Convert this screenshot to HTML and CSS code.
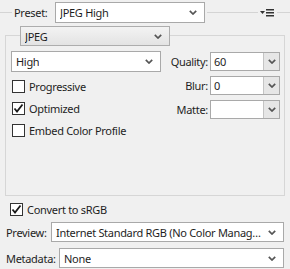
FILE: index.html
```html
<!DOCTYPE html>
<html lang="en">
<head>
  <meta charset="UTF-8" />
  <title>Save for Web - Optimize</title>
  <link rel="stylesheet" href="styles.css">
</head>
<body>
  <div class="panel">
    <!-- Preset row -->
    <div class="preset-row">
      <span class="rule rule-lead"></span>
      <span class="lbl preset-lbl">Preset:</span>
      <div class="select preset-select">
        <span class="value">JPEG High</span>
        <svg class="chev" width="8" height="5" viewBox="0 0 8 5"><polyline points="0.8,0.8 4,4 7.2,0.8" /></svg>
      </div>
      <span class="rule"></span>
      <svg class="menu-icon" width="15" height="8" viewBox="0 0 15 8">
        <polygon points="0,2 5,2 2.5,5" />
        <rect x="6" y="0" width="8" height="1.5" />
        <rect x="6" y="3" width="8" height="1.5" />
        <rect x="6" y="6" width="8" height="1.5" />
      </svg>
      <span class="rule rule-tail"></span>
    </div>

    <!-- JPEG group -->
    <div class="group">
      <div class="select button-select format-select">
        <span class="value">JPEG</span>
        <svg class="chev" width="8" height="5" viewBox="0 0 8 5"><polyline points="0.8,0.8 4,4 7.2,0.8" /></svg>
      </div>
      <div class="group-body">
        <div class="left-col">
          <div class="select quality-select">
            <span class="value">High</span>
            <svg class="chev" width="8" height="5" viewBox="0 0 8 5"><polyline points="0.8,0.8 4,4 7.2,0.8" /></svg>
          </div>
          <label class="check"><span class="box"></span>Progressive</label>
          <label class="check"><span class="box">
            <svg width="11" height="11" viewBox="0 0 11 11"><path d="M1.5 5.5 L4 8.5 L9.5 1.5" /></svg>
          </span>Optimized</label>
          <label class="check"><span class="box"></span>Embed Color Profile</label>
        </div>
        <div class="right-col">
          <div class="field-row">
            <span class="lbl">Quality:</span>
            <div class="combo"><span class="value">60</span><span class="combo-btn">
              <svg class="chev" width="8" height="5" viewBox="0 0 8 5"><polyline points="0.8,0.8 4,4 7.2,0.8" /></svg>
            </span></div>
          </div>
          <div class="field-row">
            <span class="lbl">Blur:</span>
            <div class="combo"><span class="value">0</span><span class="combo-btn">
              <svg class="chev" width="8" height="5" viewBox="0 0 8 5"><polyline points="0.8,0.8 4,4 7.2,0.8" /></svg>
            </span></div>
          </div>
          <div class="field-row">
            <span class="lbl">Matte:</span>
            <div class="combo"><span class="value"></span><span class="combo-btn">
              <svg class="chev" width="8" height="5" viewBox="0 0 8 5"><polyline points="0.8,0.8 4,4 7.2,0.8" /></svg>
            </span></div>
          </div>
        </div>
      </div>
    </div>

    <label class="check srgb"><span class="box">
      <svg width="11" height="11" viewBox="0 0 11 11"><path d="M1.5 5.5 L4 8.5 L9.5 1.5" /></svg>
    </span>Convert to sRGB</label>

    <div class="field-line">
      <span class="lbl">Preview:</span>
      <div class="select line-select preview-select">
        <span class="value">Internet Standard RGB (No Color Manag…</span>
        <svg class="chev" width="8" height="5" viewBox="0 0 8 5"><polyline points="0.8,0.8 4,4 7.2,0.8" /></svg>
      </div>
    </div>
    <div class="field-line">
      <span class="lbl">Metadata:</span>
      <div class="select line-select meta-select">
        <span class="value">None</span>
        <svg class="chev" width="8" height="5" viewBox="0 0 8 5"><polyline points="0.8,0.8 4,4 7.2,0.8" /></svg>
      </div>
    </div>
  </div>
</body>
</html>
```

FILE: styles.css
```css
* {
  margin: 0;
  padding: 0;
  box-sizing: border-box;
}

body {
  background: #f0f0f0;
  font-family: 'Noto Sans', 'Liberation Sans', sans-serif;
  font-size: 11px;
  letter-spacing: -0.3px;
  color: #1e1e1e;
}

.panel {
  width: 290px;
  height: 269px;
}

.lbl {
  white-space: nowrap;
}

/* Selects */
.select {
  display: flex;
  align-items: center;
  justify-content: space-between;
  height: 20px;
  padding: 0 7px 0 4px;
  background: #fff;
  border: 1px solid #a9a9a9;
}

.select .value {
  white-space: nowrap;
  overflow: hidden;
}

.chev polyline {
  fill: none;
  stroke: #555;
  stroke-width: 1.7;
}

.button-select {
  background: linear-gradient(#f3f3f3, #e3e3e3);
  border-color: #adadad;
}

/* Preset row */
.preset-row {
  display: flex;
  align-items: center;
  height: 23px;
  padding-top: 1px;
}

.rule {
  flex: 1;
  height: 1px;
  background: #d4d4d4;
  margin: 0 2px;
}

.rule-lead {
  flex: 0 0 12px;
  margin: 0 2px 0 0;
}

.rule-tail {
  flex: 0 0 13px;
  margin: 0 0 0 2px;
}

.preset-lbl {
  width: 41px;
}

.preset-select {
  width: 150px;
  height: 21px;
}

.menu-icon {
  fill: #333;
  margin-top: 1px;
}

/* Group box */
.group {
  width: 280px;
  height: 161px;
  margin: 12px 0 0 5px;
  border: 1px solid #d6d6d6;
}

.format-select {
  width: 150px;
  margin: -10px 0 0 14px;
}

.group-body {
  display: flex;
  padding: 5px 4px 0 5px;
}

.left-col {
  width: 150px;
}

.quality-select {
  height: 21px;
  margin-bottom: 3px;
}

.check {
  display: flex;
  align-items: center;
  gap: 4px;
  height: 22px;
  padding-left: 1px;
}

.box {
  display: flex;
  align-items: center;
  justify-content: center;
  width: 13px;
  height: 13px;
  background: #fff;
  border: 1px solid #333;
}

.box path {
  fill: none;
  stroke: #1a1a1a;
  stroke-width: 1.8;
}

.right-col {
  flex: 1;
  display: flex;
  flex-direction: column;
  gap: 5px;
  padding-top: 1px;
}

.field-row {
  display: flex;
  align-items: center;
  justify-content: flex-end;
  gap: 2px;
}

.combo {
  display: flex;
  width: 70px;
  height: 19px;
  background: #fff;
  border: 1px solid #a9a9a9;
}

.combo .value {
  flex: 1;
  padding-left: 3px;
  line-height: 17px;
}

.combo-btn {
  display: flex;
  align-items: center;
  justify-content: center;
  width: 16px;
  background: #e6e6e6;
  border-left: 1px solid #c4c4c4;
}

/* Bottom */
.srgb {
  height: 18px;
  margin-top: 4px;
  padding-left: 10px;
}

.field-line {
  display: flex;
  align-items: center;
  justify-content: space-between;
  padding: 0 6px;
  margin-top: 4px;
}

.field-line + .field-line {
  margin-top: 6px;
}

.preview-select {
  width: 233px;
}

.meta-select {
  width: 225px;
}
```
